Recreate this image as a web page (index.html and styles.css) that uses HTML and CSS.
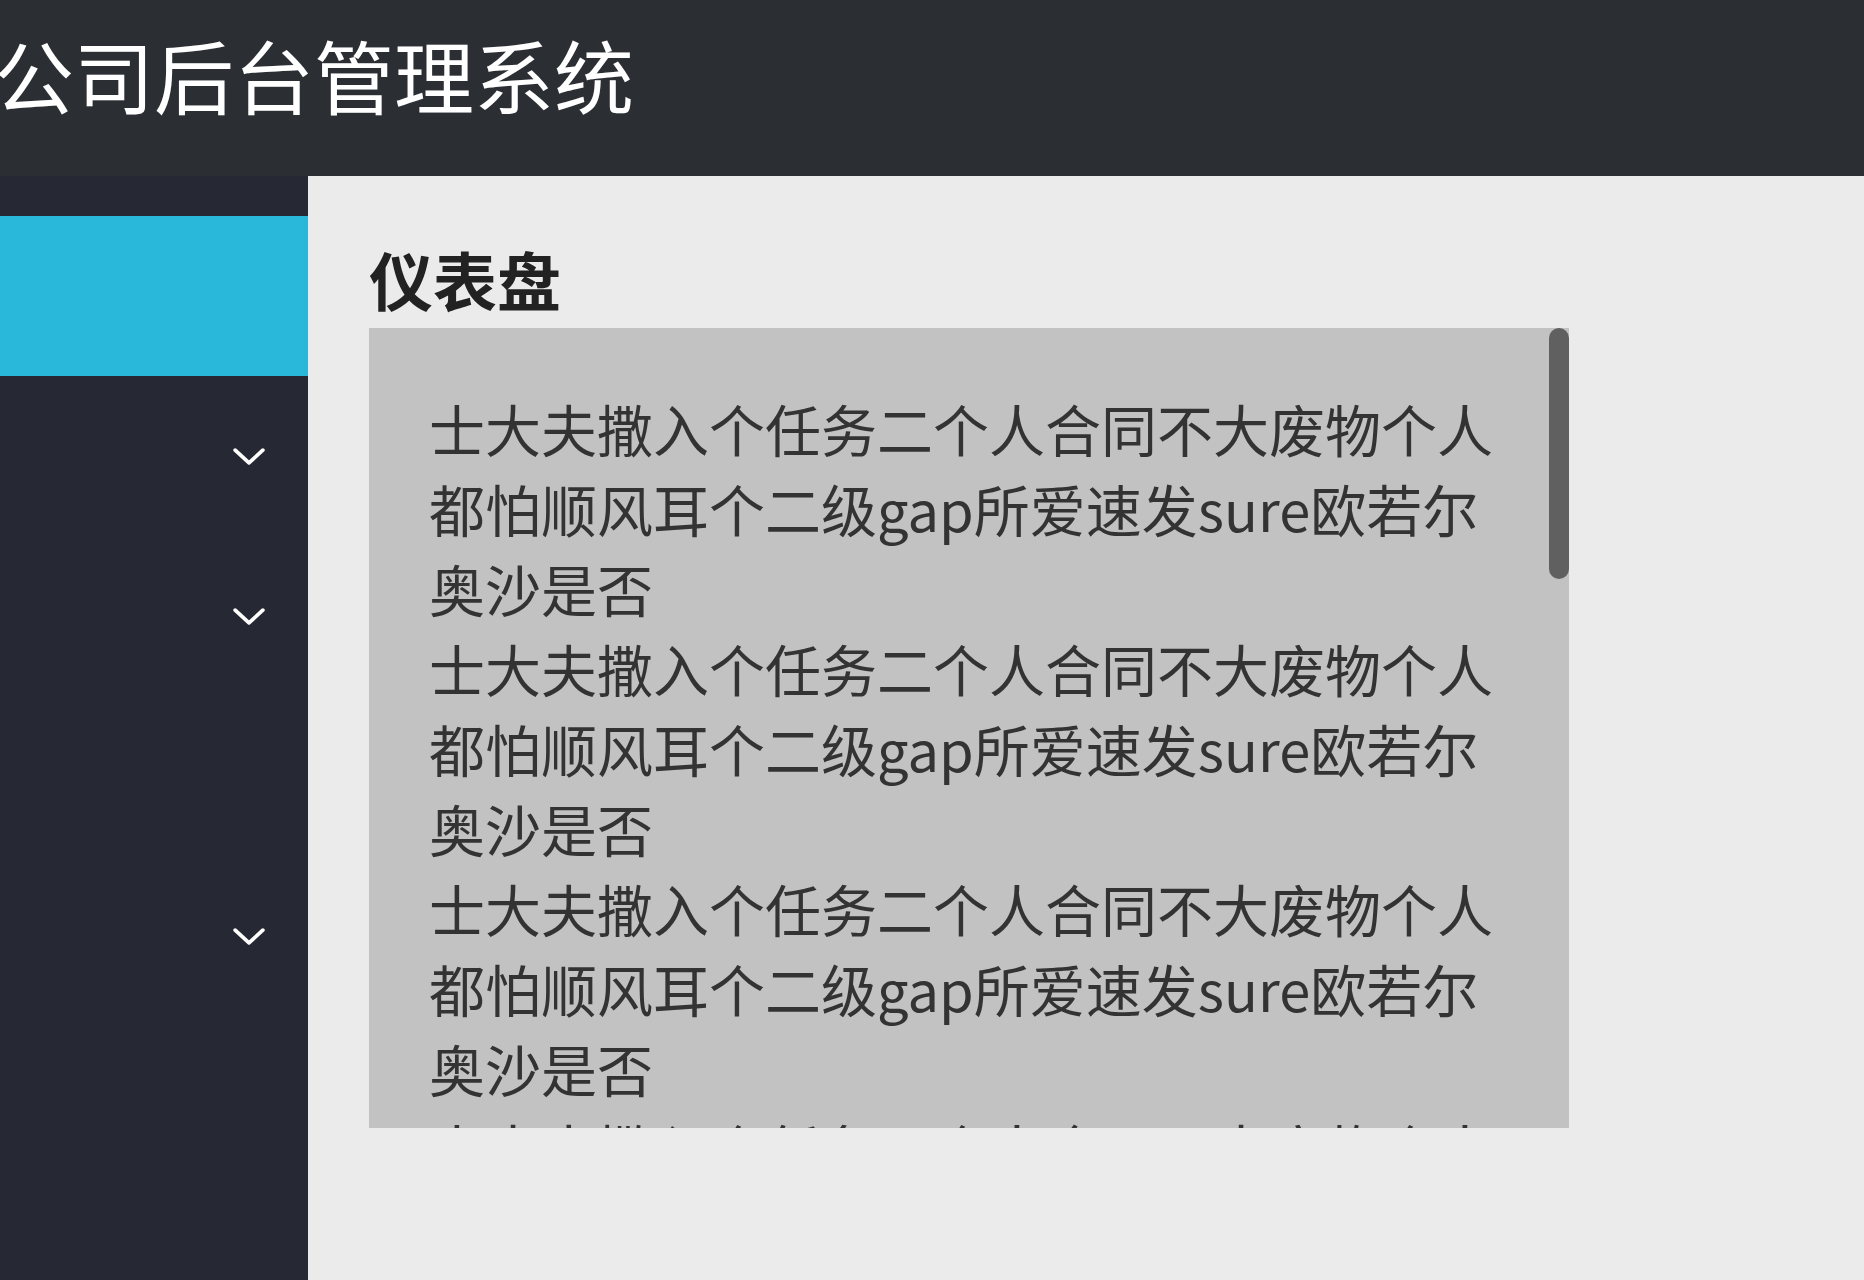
FILE: index.html
```html
<!DOCTYPE html>
<html lang="zh-CN">
<head>
    <meta charset="UTF-8">
    <meta name="viewport" content="width=device-width, initial-scale=1.0">
    <title>公司后台管理系统</title>
    <link rel="stylesheet" href="styles.css">
</head>
<body>
    <header class="header">
        <h1 class="brand">公司后台管理系统</h1>
    </header>
    <div class="layout">
        <nav class="sidebar">
            <div class="menu-item active"></div>
            <div class="menu-item">
                <svg class="arrow" viewBox="0 0 30 16"><polyline points="2,2 15,14 28,2"/></svg>
            </div>
            <div class="menu-item">
                <svg class="arrow" viewBox="0 0 30 16"><polyline points="2,2 15,14 28,2"/></svg>
            </div>
            <div class="menu-item"></div>
            <div class="menu-item">
                <svg class="arrow" viewBox="0 0 30 16"><polyline points="2,2 15,14 28,2"/></svg>
            </div>
        </nav>
        <main class="main">
            <h2 class="page-title">仪表盘</h2>
            <div class="panel-wrap">
                <div class="panel">
                    <div class="para">士大夫撒入个任务二个人合同不大废物个人都怕顺风耳个二级gap所爱速发sure欧若尔奥沙是否</div>
                    <div class="para">士大夫撒入个任务二个人合同不大废物个人都怕顺风耳个二级gap所爱速发sure欧若尔奥沙是否</div>
                    <div class="para">士大夫撒入个任务二个人合同不大废物个人都怕顺风耳个二级gap所爱速发sure欧若尔奥沙是否</div>
                    <div class="para">士大夫撒入个任务二个人合同不大废物个人都怕顺风耳个二级gap所爱速发sure欧若尔奥沙是否</div>
                    <div class="para">士大夫撒入个任务二个人合同不大废物个人都怕顺风耳个二级gap所爱速发sure欧若尔奥沙是否</div>
                    <div class="para">士大夫撒入个任务二个人合同不大废物个人都怕顺风耳个二级gap所爱速发sure欧若尔奥沙是否</div>
                    <div class="para">士大夫撒入个任务二个人合同不大废物个人都怕顺风耳个二级gap所爱速发sure欧若尔奥沙是否</div>
                    <div class="para">士大夫撒入个任务二个人合同不大废物个人都怕顺风耳个二级gap所爱速发sure欧若尔奥沙是否</div>
                    <div class="para">士大夫撒入个任务二个人合同不大废物个人都怕顺风耳个二级gap所爱速发sure欧若尔奥沙是否</div>
                    <div class="para">士大夫撒入个任务二个人合同不大废物个人都怕顺风耳个二级gap所爱速发sure欧若尔奥沙是否</div>
                </div>
                <div class="scroll-thumb"></div>
            </div>
        </main>
    </div>
</body>
</html>
```

FILE: styles.css
```css
html, body {
    height: 100%;
}
body {
    margin: 0;
    overflow: hidden;
    font-family: "Noto Sans CJK SC", "Noto Sans", sans-serif;
    background-color: #ebebeb;
}
.header {
    height: 176px;
    box-sizing: border-box;
    padding-top: 33px;
    background-color: #2b2f33;
    overflow: hidden;
}
.brand {
    margin: 0 0 0 -6px;
    font-size: 80px;
    line-height: 80px;
    font-weight: normal;
    color: #fff;
    white-space: nowrap;
}
.layout {
    display: flex;
    height: calc(100% - 176px);
}
.sidebar {
    width: 308px;
    flex-shrink: 0;
    padding-top: 40px;
    box-sizing: border-box;
    background-color: #262834;
}
.menu-item {
    height: 160px;
    display: flex;
    align-items: center;
    justify-content: flex-end;
    padding-right: 43px;
}
.menu-item.active {
    background-color: #29b8da;
}
.arrow {
    width: 32px;
    height: 17px;
    fill: none;
    stroke: #fff;
    stroke-width: 3.5;
    stroke-linecap: round;
    stroke-linejoin: round;
}
.main {
    flex: 1;
    padding: 0 61px;
}
.page-title {
    margin: 70px 0 18px;
    font-size: 64px;
    line-height: 64px;
    font-weight: bold;
    color: #222;
}
.panel-wrap {
    position: relative;
    width: 1200px;
    height: 800px;
}
.panel {
    height: 100%;
    box-sizing: border-box;
    padding: 60px 60px 60px 60px;
    overflow-y: auto;
    scrollbar-width: none;
    background-color: #c2c2c2;
    font-size: 56px;
    line-height: 80px;
    color: #333;
}
.panel::-webkit-scrollbar {
    display: none;
}
.scroll-thumb {
    position: absolute;
    top: 0;
    right: 0;
    width: 20px;
    height: 251px;
    border-radius: 10px;
    background-color: #606060;
}
```
